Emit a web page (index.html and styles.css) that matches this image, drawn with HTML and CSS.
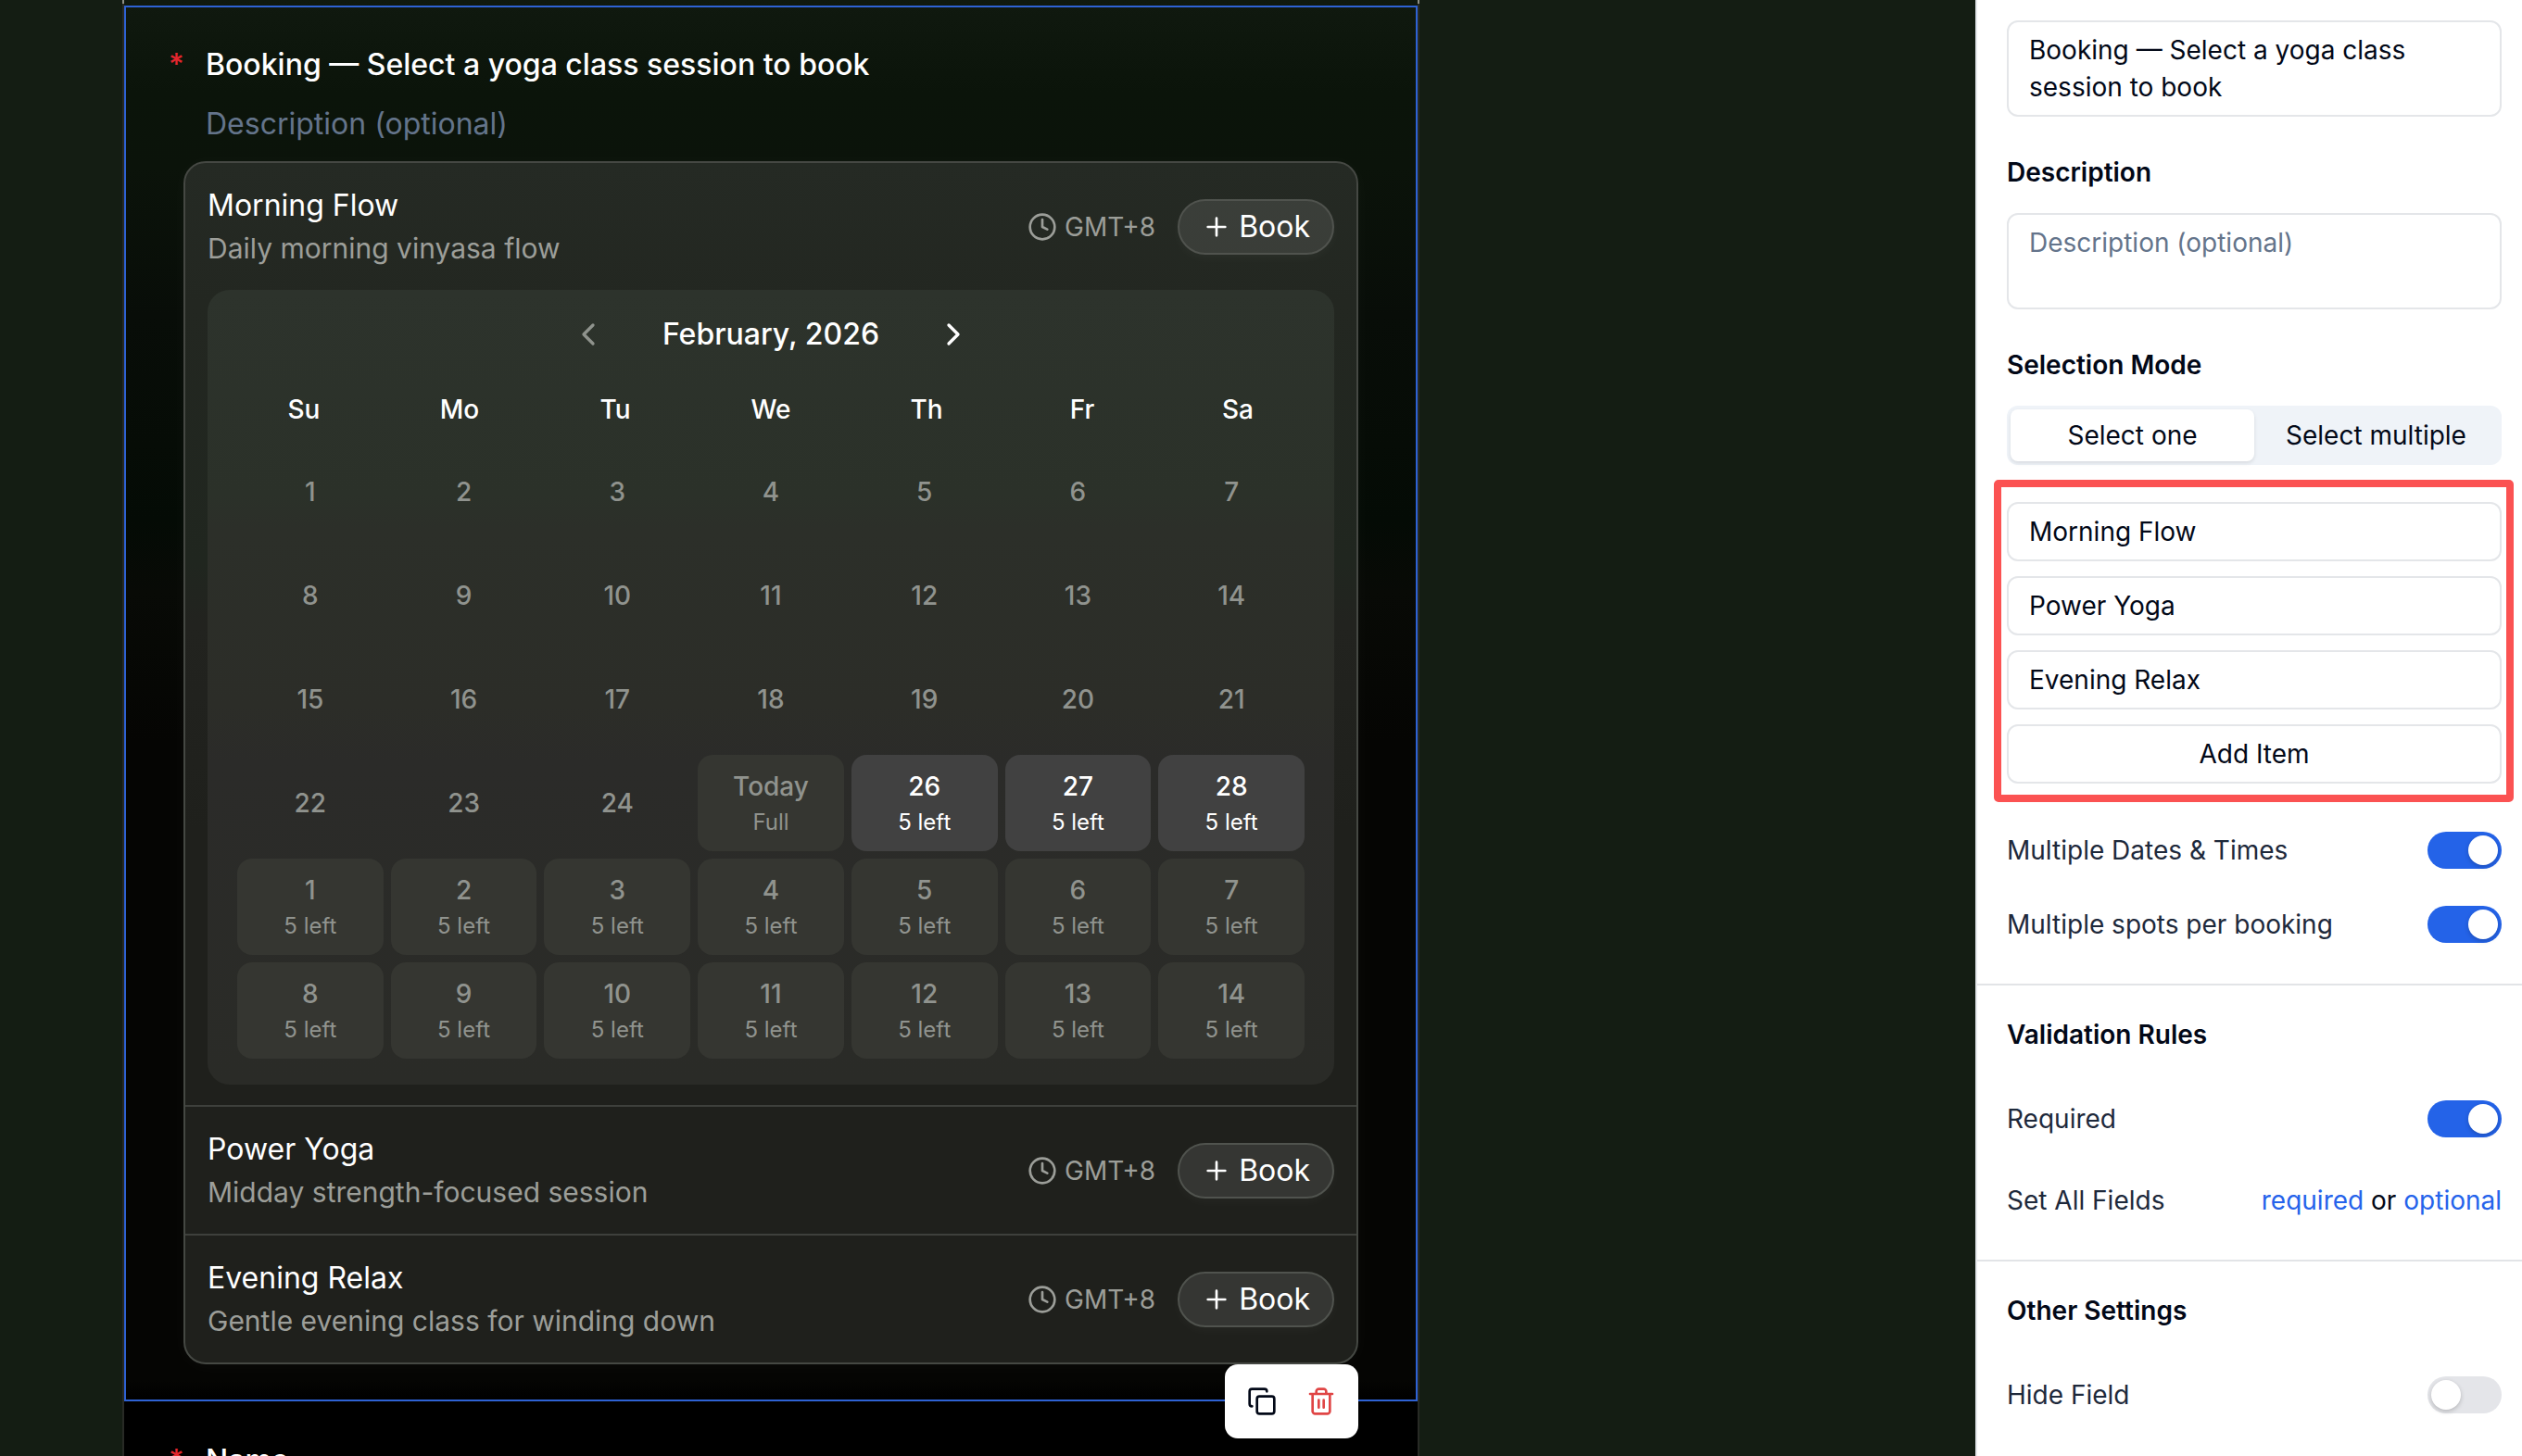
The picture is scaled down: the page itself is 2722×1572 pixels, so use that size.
FILE: index.html
```html
<!DOCTYPE html>
<html lang="en">
<head>
<meta charset="utf-8">
<title>Form builder</title>
<link rel="stylesheet" href="styles.css">
</head>
<body>
<svg class="sprite" aria-hidden="true">
  <symbol id="plus" viewBox="0 0 24 24"><path d="M5 12h14M12 5v14"/></symbol>
  <symbol id="clock" viewBox="0 0 24 24"><circle cx="12" cy="12" r="10"/><path d="M12 6v6l4 2"/></symbol>
  <symbol id="prev" viewBox="0 0 24 24"><path d="m15 18-6-6 6-6"/></symbol>
  <symbol id="next" viewBox="0 0 24 24"><path d="m9 18 6-6-6-6"/></symbol>
  <symbol id="copy" viewBox="0 0 24 24"><rect width="14" height="14" x="8" y="8" rx="2"/><path d="M4 16c-1.1 0-2-.9-2-2V4c0-1.1.9-2 2-2h10c1.1 0 2 .9 2 2"/></symbol>
  <symbol id="trash" viewBox="0 0 24 24"><path d="M3 6h18M19 6v14c0 1-1 2-2 2H7c-1 0-2-1-2-2V6M8 6V4c0-1 1-2 2-2h4c1 0 2 1 2 2v2M10 11v6M14 11v6"/></symbol>
</svg>

<main class="canvas">
  <div class="form">
    <section class="field field--selected">
      <div class="label"><span class="star">*</span>Booking — Select a yoga class session to book</div>
      <div class="hint">Description (optional)</div>

      <div class="booking">
        <article class="item">
          <header class="item-head">
            <div class="item-text"><h3>Morning Flow</h3><p>Daily morning vinyasa flow</p></div>
            <div class="zone"><svg class="icon"><use href="#clock"/></svg>GMT+8</div>
            <button class="book"><svg class="icon"><use href="#plus"/></svg>Book</button>
          </header>
          <div class="calendar">
            <div class="month">
              <svg class="chevron chevron--off"><use href="#prev"/></svg>
              <span class="month-name">February, 2026</span>
              <svg class="chevron"><use href="#next"/></svg>
            </div>
            <div class="weekdays"><span>Su</span><span>Mo</span><span>Tu</span><span>We</span><span>Th</span><span>Fr</span><span>Sa</span></div>
            <div class="days">
              <div class="day">1</div><div class="day">2</div><div class="day">3</div><div class="day">4</div><div class="day">5</div><div class="day">6</div><div class="day">7</div>
              <div class="day">8</div><div class="day">9</div><div class="day">10</div><div class="day">11</div><div class="day">12</div><div class="day">13</div><div class="day">14</div>
              <div class="day">15</div><div class="day">16</div><div class="day">17</div><div class="day">18</div><div class="day">19</div><div class="day">20</div><div class="day">21</div>
              <div class="day">22</div><div class="day">23</div><div class="day">24</div>
              <div class="day slot">Today<small>Full</small></div>
              <div class="day slot open">26<small>5 left</small></div>
              <div class="day slot open">27<small>5 left</small></div>
              <div class="day slot open">28<small>5 left</small></div>
              <div class="day slot">1<small>5 left</small></div><div class="day slot">2<small>5 left</small></div><div class="day slot">3<small>5 left</small></div><div class="day slot">4<small>5 left</small></div><div class="day slot">5<small>5 left</small></div><div class="day slot">6<small>5 left</small></div><div class="day slot">7<small>5 left</small></div>
              <div class="day slot">8<small>5 left</small></div><div class="day slot">9<small>5 left</small></div><div class="day slot">10<small>5 left</small></div><div class="day slot">11<small>5 left</small></div><div class="day slot">12<small>5 left</small></div><div class="day slot">13<small>5 left</small></div><div class="day slot">14<small>5 left</small></div>
            </div>
          </div>
        </article>
        <article class="item">
          <header class="item-head">
            <div class="item-text"><h3>Power Yoga</h3><p>Midday strength-focused session</p></div>
            <div class="zone"><svg class="icon"><use href="#clock"/></svg>GMT+8</div>
            <button class="book"><svg class="icon"><use href="#plus"/></svg>Book</button>
          </header>
        </article>
        <article class="item">
          <header class="item-head">
            <div class="item-text"><h3>Evening Relax</h3><p>Gentle evening class for winding down</p></div>
            <div class="zone"><svg class="icon"><use href="#clock"/></svg>GMT+8</div>
            <button class="book"><svg class="icon"><use href="#plus"/></svg>Book</button>
          </header>
        </article>
      </div>

      <div class="toolbar">
        <svg class="icon"><use href="#copy"/></svg>
        <svg class="icon icon--danger"><use href="#trash"/></svg>
      </div>
    </section>
    <section class="field">
      <div class="label"><span class="star">*</span>Name</div>
    </section>
  </div>
</main>

<aside class="panel">
  <section class="group group--first">
    <div class="textarea">Booking — Select a yoga class session to book</div>
    <h4>Description</h4>
    <div class="textarea textarea--empty">Description (optional)</div>
    <h4>Selection Mode</h4>
    <div class="tabs"><span class="tab tab--on">Select one</span><span class="tab">Select multiple</span></div>
    <div class="items">
      <div class="input">Morning Flow</div>
      <div class="input">Power Yoga</div>
      <div class="input">Evening Relax</div>
      <div class="input input--add">Add Item</div>
    </div>
    <div class="row row--first"><span>Multiple Dates &amp; Times</span><i class="switch switch--on"></i></div>
    <div class="row"><span>Multiple spots per booking</span><i class="switch switch--on"></i></div>
  </section>
  <section class="group">
    <h5>Validation Rules</h5>
    <div class="row row--lead"><span>Required</span><i class="switch switch--on"></i></div>
    <div class="row row--links"><span>Set All Fields</span><span class="links"><a>required</a> or <a>optional</a></span></div>
  </section>
  <section class="group">
    <h5>Other Settings</h5>
    <div class="row row--lead"><span>Hide Field</span><i class="switch"></i></div>
  </section>
</aside>
</body>
</html>
```
FILE: styles.css
```css
* { box-sizing: border-box; margin: 0; padding: 0; }

body {
  display: flex;
  width: 2722px;
  height: 1572px;
  overflow: hidden;
  background: #141d13;
  font-family: Inter, "Liberation Sans", sans-serif;
  font-size: 28px;
  line-height: 40px;
  color: #fff;
}

.sprite { display: none; }

.icon,
.chevron {
  flex: none;
  width: 32px;
  height: 32px;
  fill: none;
  stroke: currentColor;
  stroke-width: 2;
  stroke-linecap: round;
  stroke-linejoin: round;
}

/* Form canvas */
.canvas { flex: 1; height: 1572px; overflow: hidden; padding-left: 132px; }

.form {
  width: 1400px;
  height: 1600px;
  padding-top: 6px;
  border: 0 solid;
  border-width: 0 2px;
  border-image: linear-gradient(#8f9087 6px, #282a25 6px) 2;
  background: linear-gradient(#10190f 0, #0b140a 100px, #0b130a 180px, #080d08 340px, #060c06 480px, #040b05 560px, #080a06 640px, #050503 800px, #050503 1490px, #000 1513px);
}

.field { position: relative; width: 1396px; padding: 40px 64px 0; }
.field--selected {
  height: 1507px;
  padding: 38px 62px 0;
  border: 2px solid #2e62d4;
}

.label {
  position: relative;
  padding-left: 24px;
  font-size: 32px;
  font-weight: 500;
  line-height: 48px;
}
.star {
  position: absolute;
  left: -16px;
  top: 0;
  color: #e3262e;
}

.hint {
  margin: 17px 0 17px;
  padding-left: 24px;
  font-size: 32px;
  line-height: 46px;
  color: #64748b;
}

.booking {
  width: 1268px;
  border: 2px solid #454843;
  border-radius: 24px;
  background: linear-gradient(#252a24 0, #232721 150px, #20261f 430px, #22231f 500px, #1f201c 720px, #1f201c 100%);
  box-shadow: 0 2px 20px rgba(255, 255, 255, .03);
}

.item + .item { border-top: 2px solid #3e403c; }
.item:first-child { height: 1017px; }
.item-head {
  display: flex;
  align-items: center;
  height: 137px;
  padding: 0 24px;
}
.item-text { flex: 1; }
.item-text h3 { font-size: 32px; font-weight: 400; line-height: 48px; }
.item-text p { font-size: 30px; line-height: 45px; color: #9c9e99; }
.zone {
  display: flex;
  align-items: center;
  gap: 8px;
  margin-right: 24px;
  color: #9c9e99;
}
.book {
  display: flex;
  align-items: center;
  gap: 8px;
  height: 60px;
  padding: 0 24px;
  border: 2px solid #50534e;
  border-radius: 30px;
  background: rgba(255, 255, 255, .1);
  box-shadow: 0 4px 12px rgba(255, 255, 255, .03);
  font: inherit;
  font-size: 32px;
  color: #fff;
}

/* Calendar */
.calendar {
  height: 858px;
  margin: 0 24px;
  border-radius: 24px;
  background: linear-gradient(#2d332c 0, #2b3129 220px, #2c2f29 260px, #2c2d28 450px, #2b2b29 510px, #2a2b27 100%);
}
.month {
  display: flex;
  align-items: center;
  justify-content: center;
  gap: 60px;
  height: 96px;
  font-size: 32px;
  font-weight: 500;
}
.chevron { width: 40px; height: 40px; }
.chevron--off { color: #8f938d; }
.weekdays {
  display: grid;
  grid-template-columns: repeat(7, 1fr);
  height: 70px;
  padding: 0 20px;
  line-height: 66px;
  text-align: center;
  font-weight: 500;
}
.days {
  display: grid;
  grid-template-columns: repeat(7, 1fr);
  grid-auto-rows: 104px;
  gap: 8px;
  padding: 0 32px;
}
.day {
  display: flex;
  flex-direction: column;
  align-items: center;
  justify-content: center;
  border-radius: 16px;
  font-weight: 500;
  color: #90938e;
}
.day small { margin-bottom: -1px; padding-top: 1px; font-size: 24px; font-weight: 400; line-height: 36px; }
.slot { background: #353631; }
.open { background: #414141; color: #fff; }

.toolbar {
  position: absolute;
  right: 62px;
  bottom: -42px;
  display: flex;
  align-items: center;
  justify-content: center;
  gap: 32px;
  width: 144px;
  height: 80px;
  border-radius: 14px;
  background: #fff;
  color: #020817;
}
.icon--danger { color: #e04545; }

/* Settings panel */
.panel {
  width: 590px;
  height: 1572px;
  overflow: hidden;
  border-left: 2px solid #e5e7eb;
  background: #fff;
  color: #020817;
}
.group { height: 298px; padding: 33px 22px 0 32px; border-top: 2px solid #e2e4e7; }
.group--first { height: 1062px; padding-top: 22px; border-top: 0; }

h4, h5 { font-size: 28px; font-weight: 600; }
h4 { margin: 40px 0 24px; }

.textarea,
.input {
  padding: 10px 22px;
  border: 2px solid #e4e6e9;
  border-radius: 12px;
}
.textarea { height: 104px; }
.textarea--empty { color: #64748b; }
.input { height: 64px; }
.input--add { text-align: center; }

.tabs {
  display: flex;
  height: 64px;
  padding: 4px;
  border-radius: 12px;
  background: #eff3f8;
}
.tab { flex: 1; line-height: 56px; text-align: center; }
.tab--on { border-radius: 8px; background: #fff; box-shadow: 0 2px 4px rgba(0, 0, 0, .1); }

.items {
  display: grid;
  gap: 16px;
  height: 348px;
  margin: 16px -13px 0 -14px;
  padding: 16px 5px 0 6px;
  border: 8px solid #fb5252;
  border-radius: 5px;
  align-content: start;
}

.row {
  display: flex;
  align-items: center;
  justify-content: space-between;
  height: 40px;
  margin-top: 40px;
  color: #1e293b;
}
.row--first { margin-top: 32px; }
.row--lead { margin-top: 51px; }
.row--links { margin-top: 48px; }
.links { color: #020817; }
.links a { color: #2563eb; }

.switch {
  width: 80px;
  height: 40px;
  padding: 4px;
  border-radius: 20px;
  background: #e4e5e9;
}
.switch::before {
  content: "";
  display: block;
  width: 32px;
  height: 32px;
  border-radius: 50%;
  background: #fff;
  box-shadow: 0 2px 5px rgba(0, 0, 0, .2);
}
.switch--on { background: #2463e8; }
.switch--on::before { margin-left: auto; }
```
